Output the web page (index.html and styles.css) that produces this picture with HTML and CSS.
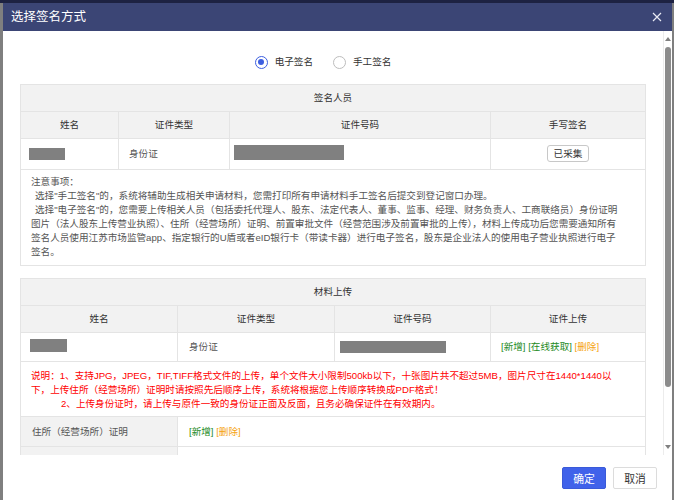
FILE: index.html
```html
<!DOCTYPE html>
<html lang="zh-CN">
<head>
<meta charset="utf-8">
<title>选择签名方式</title>
<link rel="stylesheet" href="styles.css">
</head>
<body>
<div class="dialog">
  <div class="titlebar">
    <span class="title">选择签名方式</span>
    <span class="close"><svg width="10" height="10" viewBox="0 0 10 10"><path d="M1 1L9 9M9 1L1 9" stroke="#e8eaf3" stroke-width="1.2" fill="none"/></svg></span>
  </div>
  <div class="main">
    <div class="scroller">
      <div class="radios">
        <label class="radio"><span class="dot checked"><span class="inner"></span></span><span>电子签名</span></label>
        <label class="radio"><span class="dot"></span><span>手工签名</span></label>
      </div>

      <div class="panel">
        <div class="row caption">签名人员</div>
        <div class="row g1 head">
          <div class="cell c">姓名</div>
          <div class="cell c">证件类型</div>
          <div class="cell c">证件号码</div>
          <div class="cell c">手写签名</div>
        </div>
        <div class="row g1 data1">
          <div class="cell p8"><span class="mask m-name1"></span></div>
          <div class="cell p10">身份证</div>
          <div class="cell p4"><span class="mask m-id1"></span></div>
          <div class="cell c"><span class="smallbtn">已采集</span></div>
        </div>
        <div class="row notes">
          <div class="line">注意事项：</div>
          <div class="line ind">选择"手工签名"的，系统将辅助生成相关申请材料，您需打印所有申请材料手工签名后提交到登记窗口办理。</div>
          <div class="line ind">选择"电子签名"的，您需要上传相关人员（包括委托代理人、股东、法定代表人、董事、监事、经理、财务负责人、工商联络员）身份证明</div>
          <div class="line">图片（法人股东上传营业执照）、住所（经营场所）证明、前置审批文件（经营范围涉及前置审批的上传），材料上传成功后您需要通知所有</div>
          <div class="line">签名人员使用江苏市场监管app、指定银行的U盾或者eID银行卡（带读卡器）进行电子签名，股东是企业法人的使用电子营业执照进行电子</div>
          <div class="line">签名。</div>
        </div>
      </div>

      <div class="panel second">
        <div class="row caption">材料上传</div>
        <div class="row g2 head">
          <div class="cell c">姓名</div>
          <div class="cell c">证件类型</div>
          <div class="cell c">证件号码</div>
          <div class="cell c">证件上传</div>
        </div>
        <div class="row g2 data2">
          <div class="cell p9"><span class="mask m-name2"></span></div>
          <div class="cell p11">身份证</div>
          <div class="cell p5"><span class="mask m-id2"></span></div>
          <div class="cell p10"><span class="links"><span class="g">[新增]</span> <span class="g">[在线获取]</span> <span class="o">[删除]</span></span></div>
        </div>
        <div class="row red">
          <div class="line">说明：1、支持JPG，JPEG，TIF,TIFF格式文件的上传，单个文件大小限制500kb以下，十张图片共不超过5MB，图片尺寸在1440*1440以</div>
          <div class="line">下，上传住所（经营场所）证明时请按照先后顺序上传，系统将根据您上传顺序转换成PDF格式！</div>
          <div class="line ind2">2、上传身份证时，请上传与原件一致的身份证正面及反面，且务必确保证件在有效期内。</div>
        </div>
        <div class="row g3 item">
          <div class="cell label p11">住所（经营场所）证明</div>
          <div class="cell p11"><span class="links"><span class="g">[新增]</span> <span class="o">[删除]</span></span></div>
        </div>
        <div class="row g3 item">
          <div class="cell label p11"></div>
          <div class="cell p11"></div>
        </div>
      </div>
    </div>
    <div class="scrollbar">
      <span class="arrow up"></span>
      <span class="thumb"></span>
      <span class="spacer"></span>
      <span class="arrow down"></span>
    </div>
  </div>
  <div class="footer">
    <span class="btn primary">确定</span>
    <span class="btn">取消</span>
  </div>
</div>
</body>
</html>
```

FILE: styles.css
```css
html, body {
  margin: 0;
  padding: 0;
}
body {
  width: 674px;
  height: 500px;
  overflow: hidden;
  background: linear-gradient(to bottom, #1d2242 0, #1d2242 3px, #7f7f7f 3px, #7f7f7f 100%);
  font-family: "Liberation Sans", "Noto Sans CJK SC", sans-serif;
  font-size: 9.6px;
  color: #333;
}
.dialog {
  margin: 3px 0 0 3px;
  width: 669px;
  height: 497px;
  background: #fff;
  display: flex;
  flex-direction: column;
}
.titlebar {
  height: 28px;
  flex: none;
  background: #3b4575;
  display: flex;
  align-items: center;
  justify-content: space-between;
  padding: 0 10px 0 8px;
}
.title {
  color: #fff;
  font-size: 12.5px;
  line-height: 16px;
}
.close {
  display: flex;
  width: 10px;
  height: 10px;
}
.main {
  height: 424px;
  flex: none;
  display: flex;
}
.scroller {
  flex: 1;
  overflow: hidden;
  padding: 0 17px;
}
.radios {
  display: flex;
  justify-content: center;
  height: 20px;
  margin-top: 21px;
  margin-bottom: 12px;
}
.radio {
  display: flex;
  align-items: center;
  margin-right: 20px;
  line-height: 14px;
  color: #333;
}
.dot {
  box-sizing: border-box;
  width: 13px;
  height: 13px;
  border: 1px solid #bdbdbd;
  border-radius: 50%;
  margin-right: 7px;
  display: flex;
  align-items: center;
  justify-content: center;
}
.dot.checked {
  border-color: #3d5fe0;
}
.inner {
  width: 6px;
  height: 6px;
  border-radius: 50%;
  background: #3d5fe0;
}
.panel {
  width: 626px;
  box-sizing: border-box;
  border: 1px solid #e4e4e4;
}
.panel.second {
  margin-top: 12px;
}
.row {
  box-sizing: border-box;
}
.row + .row {
  border-top: 1px solid #e4e4e4;
}
.caption {
  height: 26px;
  line-height: 26px;
  text-align: center;
  background: #f2f2f2;
  color: #333;
}
.g1, .g2, .g3 {
  display: grid;
}
.g1 { grid-template-columns: 97px 111px 261px 1fr; }
.g2 { grid-template-columns: 156px 157px 156px 1fr; }
.g3 { grid-template-columns: 156px 1fr; }
.cell {
  box-sizing: border-box;
  display: flex;
  align-items: center;
  line-height: 14px;
  color: #555;
  white-space: nowrap;
}
.cell + .cell {
  border-left: 1px solid #e4e4e4;
}
.head {
  height: 27px;
  background: #f2f2f2;
}
.head .cell {
  color: #333;
}
.c { justify-content: center; }
.p4 { padding-left: 4px; }
.p5 { padding-left: 5px; }
.p8 { padding-left: 8px; }
.p9 { padding-left: 9px; }
.p10 { padding-left: 10px; }
.p11 { padding-left: 11px; }
.data1 { height: 31px; }
.data2 { height: 29px; }
.mask {
  display: block;
  background: #808080;
}
.m-name1 { width: 36px; height: 12px; }
.m-id1 { width: 110px; height: 15px; margin-top: -3px; }
.m-name2 { width: 37px; height: 13px; margin-top: -3px; }
.m-id2 { width: 106px; height: 12px; }
.smallbtn {
  box-sizing: border-box;
  width: 42px;
  height: 17px;
  border: 1px solid #c8c8c8;
  border-radius: 3px;
  display: flex;
  align-items: center;
  justify-content: center;
  color: #333;
  background: #fff;
  margin-top: -1px;
}
.notes {
  height: 96px;
  padding: 5px 10px 0;
  color: #555;
}
.line {
  line-height: 14px;
  white-space: nowrap;
}
.ind { padding-left: 4px; }
.ind2 { padding-left: 30px; }
.red {
  height: 55px;
  padding: 7px 10px 0;
  color: #ff0000;
}
.item { height: 30px; }
.label { background: #f2f2f2; color: #555; }
.links { white-space: nowrap; }
.g { color: #238a23; }
.o { color: #f5a30f; }
.scrollbar {
  width: 9px;
  flex: none;
  box-sizing: border-box;
  border-left: 1px solid #ececec;
  display: flex;
  flex-direction: column;
  align-items: center;
  padding: 6px 0;
}
.arrow {
  width: 0;
  height: 0;
  border-left: 3px solid transparent;
  border-right: 3px solid transparent;
}
.arrow.up { border-bottom: 4px solid #808080; }
.arrow.down { border-top: 4px solid #808080; }
.thumb {
  width: 6px;
  height: 340px;
  margin-top: 6px;
  border-radius: 3px;
  background: #8c8c8c;
}
.spacer { flex: 1; }
.footer {
  flex: 1;
  display: flex;
  justify-content: flex-end;
  align-items: flex-start;
  gap: 7px;
  padding: 12px 15px 0 0;
}
.btn {
  box-sizing: border-box;
  width: 44px;
  height: 22px;
  border: 1px solid #dcdcdc;
  border-radius: 2px;
  display: flex;
  align-items: center;
  justify-content: center;
  font-size: 10.8px;
  color: #333;
  background: #fff;
}
.btn.primary {
  background: #4062ea;
  border-color: #3a5ad8;
  color: #fff;
}
```
